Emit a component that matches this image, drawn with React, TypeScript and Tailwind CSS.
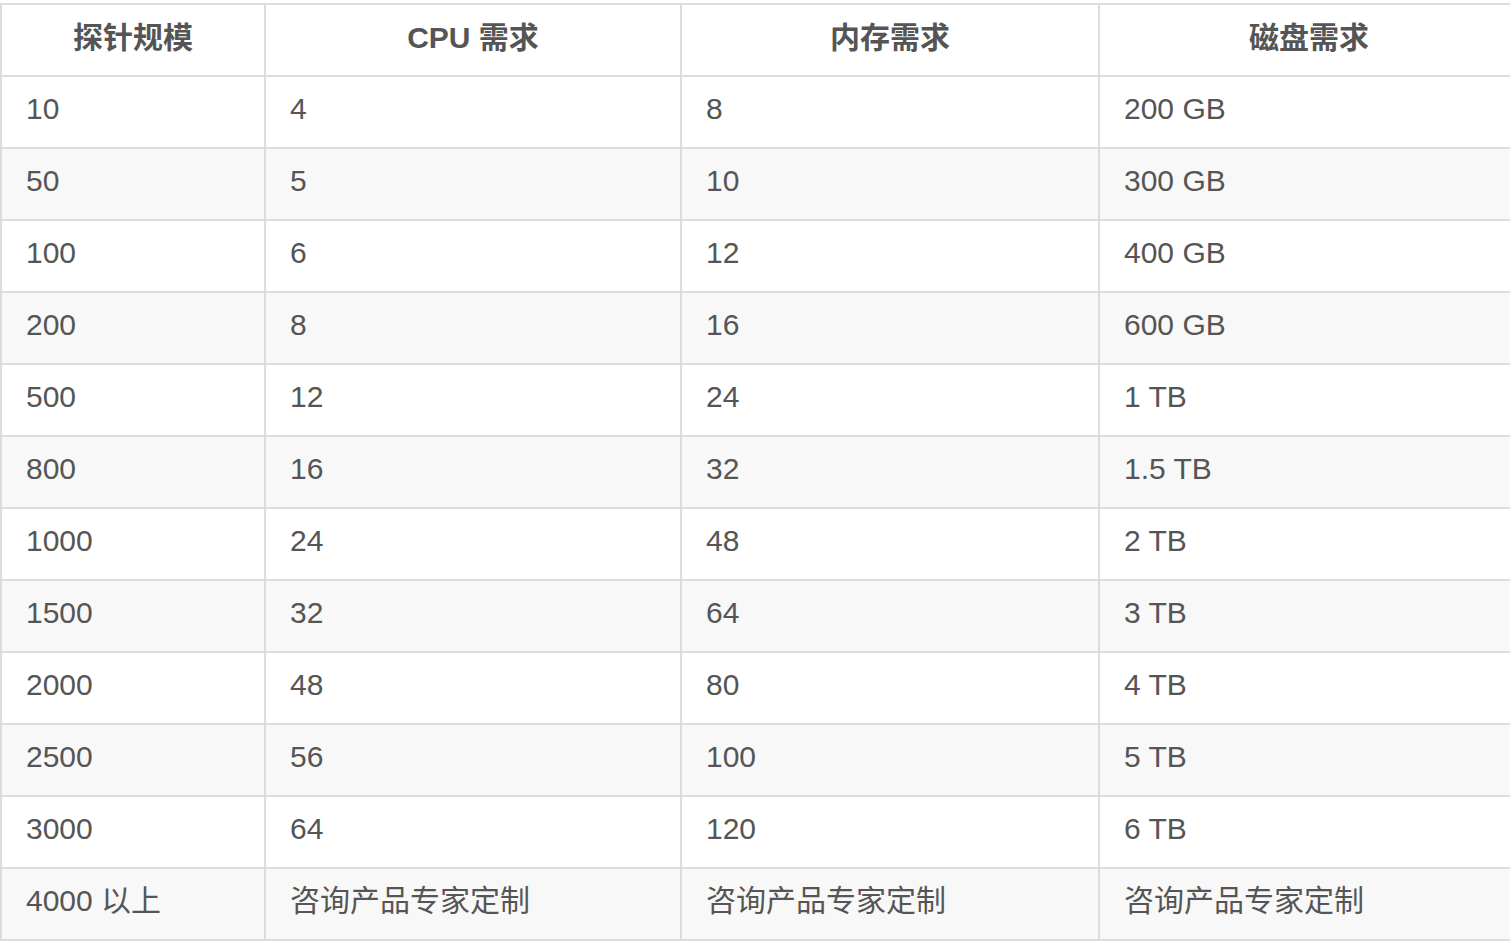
const rows: [string, string, string, string][] = [
  ["10", "4", "8", "200 GB"],
  ["50", "5", "10", "300 GB"],
  ["100", "6", "12", "400 GB"],
  ["200", "8", "16", "600 GB"],
  ["500", "12", "24", "1 TB"],
  ["800", "16", "32", "1.5 TB"],
  ["1000", "24", "48", "2 TB"],
  ["1500", "32", "64", "3 TB"],
  ["2000", "48", "80", "4 TB"],
  ["2500", "56", "100", "5 TB"],
  ["3000", "64", "120", "6 TB"],
  ["4000 以上", "咨询产品专家定制", "咨询产品专家定制", "咨询产品专家定制"],
]

const widths = ["w-[264px]", "w-[416px]", "w-[418px]", "w-[420px]"]
const headers = ["探针规模", "CPU 需求", "内存需求", "磁盘需求"]

export default function App() {
  return (
    <div
      className="min-h-screen w-full overflow-hidden bg-white pt-[3px] text-[#555]"
      style={{ fontFamily: '"Liberation Sans", "Noto Sans CJK SC", sans-serif' }}
    >
      <div className="w-[1518px]">
        <div className="flex h-[74px] border-y-2 border-[#dddddd]">
          {headers.map((h, i) => (
            <div
              key={h}
              className={`${widths[i]} flex shrink-0 items-center justify-center border-l-2 border-[#dddddd] pb-[6px] text-[30px] font-bold`}
            >
              {h}
            </div>
          ))}
        </div>
        {rows.map((r, ri) => (
          <div
            key={r[0]}
            className={`flex h-[72px] border-b-2 border-[#dddddd] ${ri % 2 === 1 ? "bg-[#f8f8f8]" : "bg-white"}`}
          >
            {r.map((c, i) => (
              <div
                key={i}
                className={`${widths[i]} flex shrink-0 items-center border-l-2 border-[#dddddd] pb-[8px] pl-[24px] text-[30px]`}
              >
                {c}
              </div>
            ))}
          </div>
        ))}
      </div>
    </div>
  )
}
